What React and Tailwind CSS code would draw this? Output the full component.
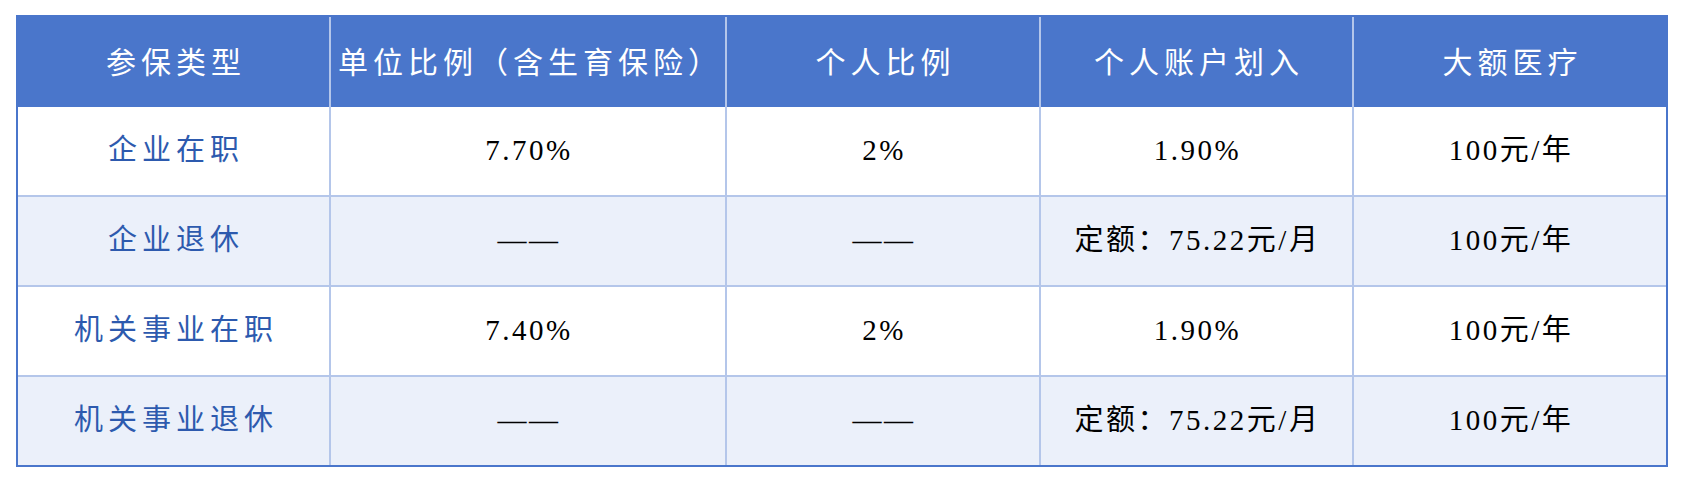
import React from "react";

const cols = ["w-[313px]", "w-[396px]", "w-[314px]", "w-[313px]", "w-[312px]"];

const headers = ["参保类型", "单位比例（含生育保险）", "个人比例", "个人账户划入", "大额医疗"];

const rows = [
  ["企业在职", "7.70%", "2%", "1.90%", "100元/年"],
  ["企业退休", "——", "——", "定额：75.22元/月", "100元/年"],
  ["机关事业在职", "7.40%", "2%", "1.90%", "100元/年"],
  ["机关事业退休", "——", "——", "定额：75.22元/月", "100元/年"],
];

const font = { fontFamily: '"Liberation Serif", "Noto Sans CJK SC", serif' };

export default function App() {
  return (
    <div className="min-h-screen bg-white pl-[16px] pt-[15px]" style={font}>
      <div className="w-[1652px] border-2 border-[#4a76cb]">
        <div className="flex h-[90px] bg-[#4a76cb] text-white">
          {headers.map((h, i) => (
            <div
              key={h}
              className={`${cols[i]} flex items-center justify-center pl-[5px] text-[30px] tracking-[5px] ${
                i < 4 ? "border-r-2 border-[#b4c6ea]" : ""
              }`}
            >
              {h}
            </div>
          ))}
        </div>
        {rows.map((row, r) => (
          <div
            key={r}
            className={`flex ${r < 3 ? "h-[90px] border-b-2 border-[#b4c6ea]" : "h-[88px]"} ${
              r % 2 === 1 ? "bg-[#ebf0fa]" : "bg-white"
            }`}
          >
            {row.map((cell, i) => (
              <div
                key={i}
                className={`${cols[i]} flex items-center justify-center ${
                  i < 4 ? "border-r-2 border-[#b4c6ea]" : ""
                } ${
                  i === 0
                    ? "pl-[5px] text-[29px] tracking-[5px] text-[#2d5aae]"
                    : "pl-[2px] text-[29px] tracking-[2.5px] text-black"
                }`}
              >
                {cell}
              </div>
            ))}
          </div>
        ))}
      </div>
    </div>
  );
}
